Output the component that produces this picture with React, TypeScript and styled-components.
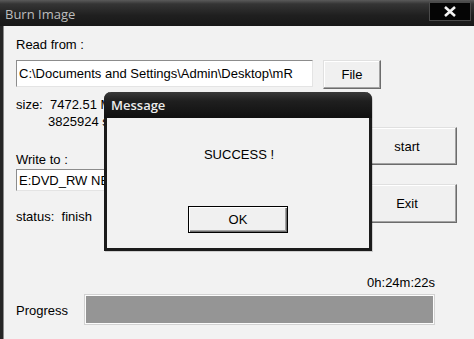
import React from "react";
import styled, { createGlobalStyle } from "styled-components";

const GlobalStyle = createGlobalStyle`
  html, body {
    margin: 0;
    padding: 0;
    background: #f2f2f2;
    overflow: hidden;
  }
  body {
    font-family: "Liberation Sans", Arial, sans-serif;
    font-size: 13px;
    color: #000;
  }
`;

const Window = styled.div`
  position: relative;
  width: 474px;
  height: 339px;
  background: #262626;
  overflow: hidden;
`;

const TitleBar = styled.div`
  height: 26px;
  display: flex;
  align-items: center;
  justify-content: space-between;
  padding: 0 3px 0 5px;
  box-sizing: border-box;
  background: linear-gradient(#5a5a5a 0, #353535 15%, #1f1f1f 60%, #181818 100%);
`;

const Title = styled.span`
  font-family: "Open Sans", "Noto Sans", sans-serif;
  font-size: 13px;
  color: #bdbdbd;
  margin-top: 2px;
`;

const CloseButton = styled.div`
  width: 40px;
  height: 17px;
  margin-top: -3px;
  background: #050505;
  border: 1px solid #4a4a4a;
  display: flex;
  align-items: center;
  justify-content: center;
`;

const Body = styled.div`
  margin-left: 3px;
  height: 313px;
  background: #f2f2f2;
  border-left: 1px solid #8a8a8a;
  padding: 11px 0 0 12px;
  box-sizing: border-box;
`;

const TopSection = styled.div`
  display: flex;
  gap: 10px;
`;

const LeftColumn = styled.div`
  width: 297px;
  display: flex;
  flex-direction: column;
`;

const RightColumn = styled.div`
  display: flex;
  flex-direction: column;
  align-items: flex-start;
  padding-top: 23px;
`;

const Label = styled.div<{ $gap?: number; $indent?: number }>`
  line-height: 16px;
  height: 16px;
  margin-top: ${(p) => p.$gap ?? 0}px;
  padding-left: ${(p) => p.$indent ?? 0}px;
  white-space: pre;
`;

const TextInput = styled.div<{ $height: number; $gap: number }>`
  height: ${(p) => p.$height}px;
  margin-top: ${(p) => p.$gap}px;
  box-sizing: border-box;
  background: #fff;
  border: 1px solid;
  border-color: #8c8c8c #e4e4e4 #e4e4e4 #8c8c8c;
  padding-left: 2px;
  display: flex;
  align-items: center;
  font-size: 13px;
  white-space: nowrap;
  overflow: hidden;
`;

const Button = styled.div<{ $w: number; $h: number; $gap?: number; $indent?: number }>`
  width: ${(p) => p.$w}px;
  height: ${(p) => p.$h}px;
  margin-top: ${(p) => p.$gap ?? 0}px;
  margin-left: ${(p) => p.$indent ?? 0}px;
  box-sizing: border-box;
  background: #f0f0f0;
  border: 1px solid;
  border-color: #e0e0e0 #6c6c6c #6c6c6c #e0e0e0;
  box-shadow: inset -1px -1px 0 #a3a3a3, inset 1px 1px 0 #ffffff;
  display: flex;
  align-items: center;
  justify-content: center;
  font-size: 13px;
`;

const BottomSection = styled.div`
  width: 419px;
  margin-top: 50px;
  display: flex;
  flex-direction: column;
`;

const TimeText = styled.div`
  text-align: right;
  line-height: 16px;
`;

const ProgressRow = styled.div`
  display: flex;
  align-items: center;
  margin-top: 3px;
`;

const ProgressLabel = styled.div`
  width: 68px;
  padding-top: 1px;
`;

const ProgressTrack = styled.div`
  flex: 1;
  height: 31px;
  box-sizing: border-box;
  border: 1px solid #d2d2d2;
  background: #fcfcfc;
  padding: 1px;
`;

const ProgressFill = styled.div`
  height: 100%;
  background: #959595;
`;

const MessageBox = styled.div`
  position: absolute;
  left: 104px;
  top: 92px;
  width: 268px;
  height: 159px;
  box-sizing: border-box;
  border: 3px solid #1b1b1b;
  border-top: none;
  border-radius: 7px 7px 0 0;
  background: #f2f2f2;
  display: flex;
  flex-direction: column;
  box-shadow: 1px 1px 0 rgba(0, 0, 0, 0.15);
`;

const MessageTitle = styled.div`
  height: 26px;
  margin: 0 -3px;
  border-radius: 7px 7px 0 0;
  background: linear-gradient(#3a3a3a 0, #1f1f1f 35%, #101010 100%);
  display: flex;
  align-items: center;
  padding-left: 7px;
  font-family: "Open Sans", "Noto Sans", sans-serif;
  font-size: 13px;
  font-weight: 600;
  color: #ececec;
`;

const MessageBody = styled.div`
  display: flex;
  flex-direction: column;
  align-items: center;
`;

const MessageText = styled.div`
  margin-top: 29px;
  line-height: 16px;
  padding-left: 2px;
`;

const OkButton = styled(Button)`
  border: 1px solid #000;
  box-shadow: inset 1px 1px 0 #ffffff, inset -1px -1px 0 #6c6c6c, inset -2px -2px 0 #a3a3a3;
`;

const App: React.FC = () => {
  return (
    <>
      <GlobalStyle />
      <Window>
        <TitleBar>
          <Title>Burn Image</Title>
          <CloseButton>
            <svg width="14" height="11" viewBox="0 0 14 11">
              <path d="M2 1 L12 10 M12 1 L2 10" stroke="#f4f4f4" strokeWidth="2.6" />
            </svg>
          </CloseButton>
        </TitleBar>
        <Body>
          <TopSection>
            <LeftColumn>
              <Label>Read from :</Label>
              <TextInput $height={27} $gap={7}>
                C:\Documents and Settings\Admin\Desktop\mR
              </TextInput>
              <Label $gap={10}>size:  7472.51 MB</Label>
              <Label $gap={1} $indent={32}>3825924 sectors</Label>
              <Label $gap={22}>Write to :</Label>
              <TextInput $height={22} $gap={1}>
                E:DVD_RW NEC
              </TextInput>
              <Label $gap={18}>status:  finish</Label>
            </LeftColumn>
            <RightColumn>
              <Button $w={58} $h={29}>File</Button>
              <Button $w={100} $h={38} $gap={38} $indent={34}>start</Button>
              <Button $w={100} $h={39} $gap={19} $indent={34}>Exit</Button>
            </RightColumn>
          </TopSection>
          <BottomSection>
            <TimeText>0h:24m:22s</TimeText>
            <ProgressRow>
              <ProgressLabel>Progress</ProgressLabel>
              <ProgressTrack>
                <ProgressFill />
              </ProgressTrack>
            </ProgressRow>
          </BottomSection>
        </Body>
        <MessageBox>
          <MessageTitle>Message</MessageTitle>
          <MessageBody>
            <MessageText>SUCCESS !</MessageText>
            <OkButton $w={100} $h={27} $gap={43}>OK</OkButton>
          </MessageBody>
        </MessageBox>
      </Window>
    </>
  );
};

export default App;
